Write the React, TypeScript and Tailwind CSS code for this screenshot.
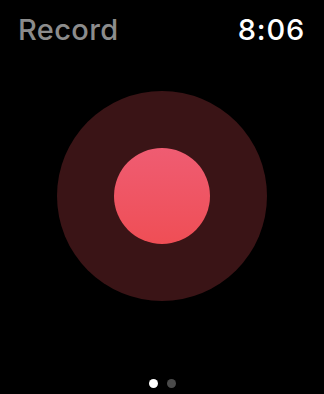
export default function App() {
  return (
    <div
      className="w-[324px] h-[394px] bg-black flex flex-col overflow-hidden"
      style={{ fontFamily: "Inter, 'Liberation Sans', sans-serif" }}
    >
      <div className="flex items-center justify-between pl-[18px] pr-[19px] pt-[12px] h-[46px]">
        <span className="text-[29px] font-medium leading-none text-[#8c8c8c] tracking-[0.4px]">Record</span>
        <span className="text-[29px] font-medium leading-none text-white tracking-[0.8px]">8:06</span>
      </div>
      <div className="flex justify-center pt-[45px]">
        <button className="w-[210px] h-[210px] rounded-full bg-[#3a1416] flex items-center justify-center">
          <div className="w-[96px] h-[96px] rounded-full bg-gradient-to-b from-[#ef5c72] to-[#ef4e55]" />
        </button>
      </div>
      <div className="flex-1" />
      <div className="flex justify-center gap-[9px] pb-[6px]">
        <div className="w-[9px] h-[9px] rounded-full bg-white" />
        <div className="w-[9px] h-[9px] rounded-full bg-[#4a4a4a]" />
      </div>
    </div>
  );
}
